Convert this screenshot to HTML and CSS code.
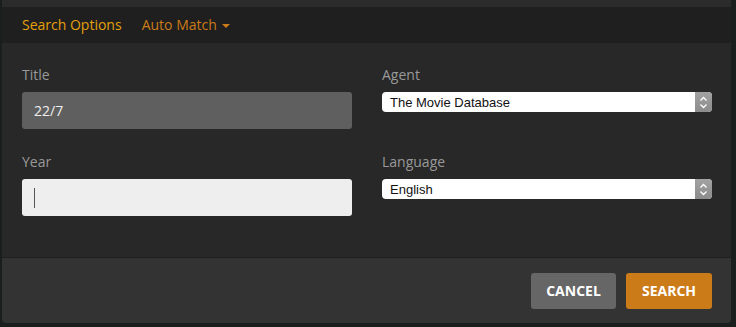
FILE: index.html
```html
<!DOCTYPE html>
<html lang="en">
<head>
    <meta charset="UTF-8">
    <meta name="viewport" content="width=device-width, initial-scale=1.0">
    <title>Search Options</title>
    <link rel="stylesheet" href="styles.css">
</head>
<body>
    <div class="dialog">
        <div class="top-strip"></div>
        <div class="tabs">
            <a href="#" class="tab tab-active">Search Options</a>
            <a href="#" class="tab tab-menu">Auto Match <span class="caret"></span></a>
        </div>

        <form class="form-body">
            <div class="field">
                <label for="title">Title</label>
                <input id="title" class="text-input text-input-filled" type="text" value="22/7">
            </div>
            <div class="field">
                <label for="agent">Agent</label>
                <div class="select">
                    <select id="agent">
                        <option>The Movie Database</option>
                    </select>
                    <span class="stepper">
                        <svg width="9" height="13" viewBox="0 0 9 13"><path d="M1.5 4.5 L4.5 1.5 L7.5 4.5 M1.5 8.5 L4.5 11.5 L7.5 8.5" fill="none" stroke="#fff" stroke-width="1.3"/></svg>
                    </span>
                </div>
            </div>
            <div class="field">
                <label for="year">Year</label>
                <div class="input-wrap">
                    <input id="year" class="text-input text-input-focus" type="text" value="">
                </div>
            </div>
            <div class="field">
                <label for="language">Language</label>
                <div class="select">
                    <select id="language">
                        <option>English</option>
                    </select>
                    <span class="stepper">
                        <svg width="9" height="13" viewBox="0 0 9 13"><path d="M1.5 4.5 L4.5 1.5 L7.5 4.5 M1.5 8.5 L4.5 11.5 L7.5 8.5" fill="none" stroke="#fff" stroke-width="1.3"/></svg>
                    </span>
                </div>
            </div>
        </form>

        <div class="footer">
            <button class="btn btn-cancel" type="button">Cancel</button>
            <button class="btn btn-search" type="button">Search</button>
        </div>
    </div>
</body>
</html>
```

FILE: styles.css
```css
:root {
    --page-bg: #1a1f1e;
    --strip-bg: #2b2b2b;
    --header-bg: #1f1f1f;
    --body-bg: #282828;
    --footer-bg: #333333;
    --label-color: #999999;
    --gold: #e5a00d;
    --orange: #cc7b19;
}

body {
    margin: 0;
    background-color: var(--page-bg);
    font-family: 'Open Sans', 'Noto Sans', sans-serif;
    font-size: 14px;
}

.dialog {
    width: 729px;
    height: 323px;
    margin: 0 0 0 2px;
    display: flex;
    flex-direction: column;
    border-radius: 0 0 4px 4px;
    overflow: hidden;
}

.top-strip {
    height: 7px;
    background-color: var(--strip-bg);
}

/* Tabs */
.tabs {
    height: 36px;
    background-color: var(--header-bg);
    display: flex;
    align-items: center;
    padding-left: 20px;
    gap: 20px;
}

.tab {
    text-decoration: none;
    line-height: 20px;
}

.tab-active {
    color: var(--gold);
}

.tab-menu {
    color: var(--orange);
    display: flex;
    align-items: center;
    gap: 5px;
}

.caret {
    width: 0;
    height: 0;
    border-left: 4px solid transparent;
    border-right: 4px solid transparent;
    border-top: 4px solid var(--orange);
    margin-top: 1px;
}

/* Form */
.form-body {
    height: 214px;
    box-sizing: border-box;
    margin: 0;
    padding: 22px 19px 0 20px;
    background-color: var(--body-bg);
    display: grid;
    grid-template-columns: 330px 330px;
    column-gap: 30px;
    row-gap: 23px;
    align-content: start;
}

.field label {
    display: block;
    color: var(--label-color);
    line-height: 20px;
    margin-bottom: 7px;
}

.text-input {
    display: block;
    width: 100%;
    height: 37px;
    box-sizing: border-box;
    border: none;
    border-radius: 3px;
    padding: 0 12px;
    font-family: 'Open Sans', 'Noto Sans', sans-serif;
    font-size: 14px;
    outline: none;
}

.text-input-filled {
    background-color: #5f5f5f;
    color: #eeeeee;
}

.text-input-focus {
    background-color: #eeeeee;
    color: #333333;
}

.input-wrap {
    position: relative;
}

.input-wrap::after {
    content: '';
    position: absolute;
    left: 12px;
    top: 9px;
    width: 1px;
    height: 20px;
    background-color: #555555;
}

.select {
    display: flex;
    height: 20px;
    border-radius: 4px;
    overflow: hidden;
    background-color: #ffffff;
}

.select select {
    flex: 1;
    appearance: none;
    -webkit-appearance: none;
    border: none;
    background: transparent;
    padding: 0 0 0 8px;
    font-family: 'Liberation Sans', Arial, sans-serif;
    font-size: 13px;
    color: #111111;
    outline: none;
}

.stepper {
    width: 17px;
    display: flex;
    align-items: center;
    justify-content: center;
    background: linear-gradient(#a2a2a2, #8c8c8c);
}

/* Footer */
.footer {
    flex: 1;
    background-color: var(--footer-bg);
    border-top: 1px solid #1f1f1f;
    display: flex;
    justify-content: flex-end;
    align-items: flex-start;
    gap: 10px;
    padding: 15px 19px 0 0;
}

.btn {
    width: 85px;
    height: 36px;
    border: none;
    border-radius: 3px;
    padding: 0 0 1px;
    color: #ffffff;
    font-family: 'Open Sans', 'Noto Sans', sans-serif;
    font-weight: bold;
    font-size: 14px;
    text-transform: uppercase;
    cursor: pointer;
}

.btn-cancel {
    background-color: #666666;
}

.btn-search {
    width: 86px;
    background-color: var(--orange);
}
```
